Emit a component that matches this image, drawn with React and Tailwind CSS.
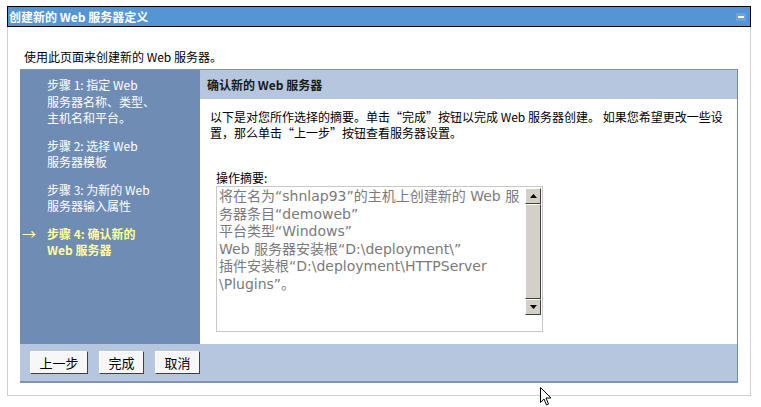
const font = { fontFamily: '"Noto Sans CJK SC", "DejaVu Sans", sans-serif' };

const steps = [
  { lines: ["步骤 1: 指定 Web", "服务器名称、类型、", "主机名和平台。"] },
  { lines: ["步骤 2: 选择 Web", "服务器模板"] },
  { lines: ["步骤 3: 为新的 Web", "服务器输入属性"] },
  { lines: ["步骤 4: 确认新的", "Web 服务器"], current: true },
];

const summary = [
  "将在名为“shnlap93”的主机上创建新的 Web 服",
  "务器条目“demoweb”",
  "平台类型“Windows”",
  "Web 服务器安装根“D:\\deployment\\”",
  "插件安装根“D:\\deployment\\HTTPServer",
  "\\Plugins”。",
];

function WizButton({ children, w }) {
  return (
    <button
      className={`h-[23px] ${w} bg-[#f7f7f7] border border-t-white border-l-white border-r-[#404040] border-b-[#404040] text-[13px] text-black leading-none`}
    >
      {children}
    </button>
  );
}

export default function App() {
  return (
    <div className="relative w-[761px] h-[407px] bg-white pt-[6px] pl-[7px]" style={font}>
      <div className="w-[744px]">
        <div className="h-[21px] bg-[#5395d5] border border-black flex items-center justify-between pl-[1px] pr-[4px]">
          <span className="text-[12px] font-bold text-white leading-none">创建新的 Web 服务器定义</span>
          <span className="w-[10px] h-[8px] bg-[#6fa4db] flex items-center justify-center">
            <span className="w-[6px] h-[2px] bg-white" />
          </span>
        </div>
        <div className="h-[369px] border-x border-b border-[#cfcfcf] pl-[12px] pr-[12px]">
          <p className="pl-[4px] pt-[22px] h-[42px] text-[12px] leading-[16px] text-black">
            使用此页面来创建新的 Web 服务器。
          </p>
          <div className="w-[718px] border-t border-[#7f94b4] border-r border-r-[#6f8ab4]">
            <div className="flex h-[274px]">
              <div className="w-[180px] bg-[#6f8cb5] pt-[7px]">
                {steps.map((s, i) => (
                  <div key={i} className="relative pl-[27px] mb-[11px]">
                    {s.current && (
                      <span className="absolute left-[2px] top-[-1px] text-[14px] text-[#ffff99] leading-[16px]">→</span>
                    )}
                    {s.lines.map((l) => (
                      <div
                        key={l}
                        className={`text-[12px] leading-[16.5px] ${s.current ? "text-[#ffff99] font-bold" : "text-white"}`}
                      >
                        {l}
                      </div>
                    ))}
                  </div>
                ))}
              </div>
              <div className="flex-1 bg-white">
                <div className="h-[29px] bg-[#b5c6de] flex items-center pl-[7px]">
                  <span className="text-[12px] font-bold text-[#1a1a1a]">确认新的 Web 服务器</span>
                </div>
                <div className="pl-[10px] pt-[10px] text-[12px] leading-[16px] text-black">
                  <div>以下是对您所作选择的摘要。单击“完成”按钮以完成 Web 服务器创建。 如果您希望更改一些设</div>
                  <div>置，那么单击“上一步”按钮查看服务器设置。</div>
                </div>
                <div className="pl-[16px] pt-[29px]">
                  <div className="text-[12px] leading-[16px] text-black">操作摘要:</div>
                  <div className="w-[327px] h-[146px] border border-[#c8c8c8] flex pt-[1px]">
                    <div className="flex-1 pl-[2px] text-[14px] leading-[17.6px] text-[#7a7a7a] whitespace-nowrap overflow-hidden" style={{ fontFamily: '"DejaVu Sans", "Noto Sans CJK SC", sans-serif' }}>
                      {summary.map((l) => (
                        <div key={l}>{l}</div>
                      ))}
                    </div>
                    <div className="w-[16px] h-[127px] mr-[1px] flex flex-col">
                      <div className="h-[16px] bg-[#d4d0c8] border border-t-white border-l-white border-r-[#404040] border-b-[#404040] flex items-center justify-center">
                        <svg width="7" height="4" viewBox="0 0 7 4"><path d="M3.5 0L7 4H0z" fill="#000" /></svg>
                      </div>
                      <div className="flex-1 bg-[#d4d0c8] border border-t-white border-l-white border-r-[#404040] border-b-[#404040]" />
                      <div className="h-[16px] bg-[#d4d0c8] border border-t-white border-l-white border-r-[#404040] border-b-[#404040] flex items-center justify-center">
                        <svg width="7" height="4" viewBox="0 0 7 4"><path d="M0 0H7L3.5 4z" fill="#000" /></svg>
                      </div>
                    </div>
                  </div>
                </div>
              </div>
            </div>
            <div className="h-[39px] bg-[#b5c6de] border-b-2 border-[#7f94b4] flex items-center gap-[11px] pl-[10px]">
              <WizButton w="w-[58px]">上一步</WizButton>
              <WizButton w="w-[45px]">完成</WizButton>
              <WizButton w="w-[45px]">取消</WizButton>
            </div>
          </div>
        </div>
      </div>
      <svg className="absolute left-[540px] top-[387px]" width="12" height="19" viewBox="0 0 12 19">
        <path d="M0.5 0.5V15.5L4 12L6.5 18L8.5 17L6 11H11L0.5 0.5Z" fill="#fff" stroke="#000" strokeWidth="1" />
      </svg>
    </div>
  );
}
